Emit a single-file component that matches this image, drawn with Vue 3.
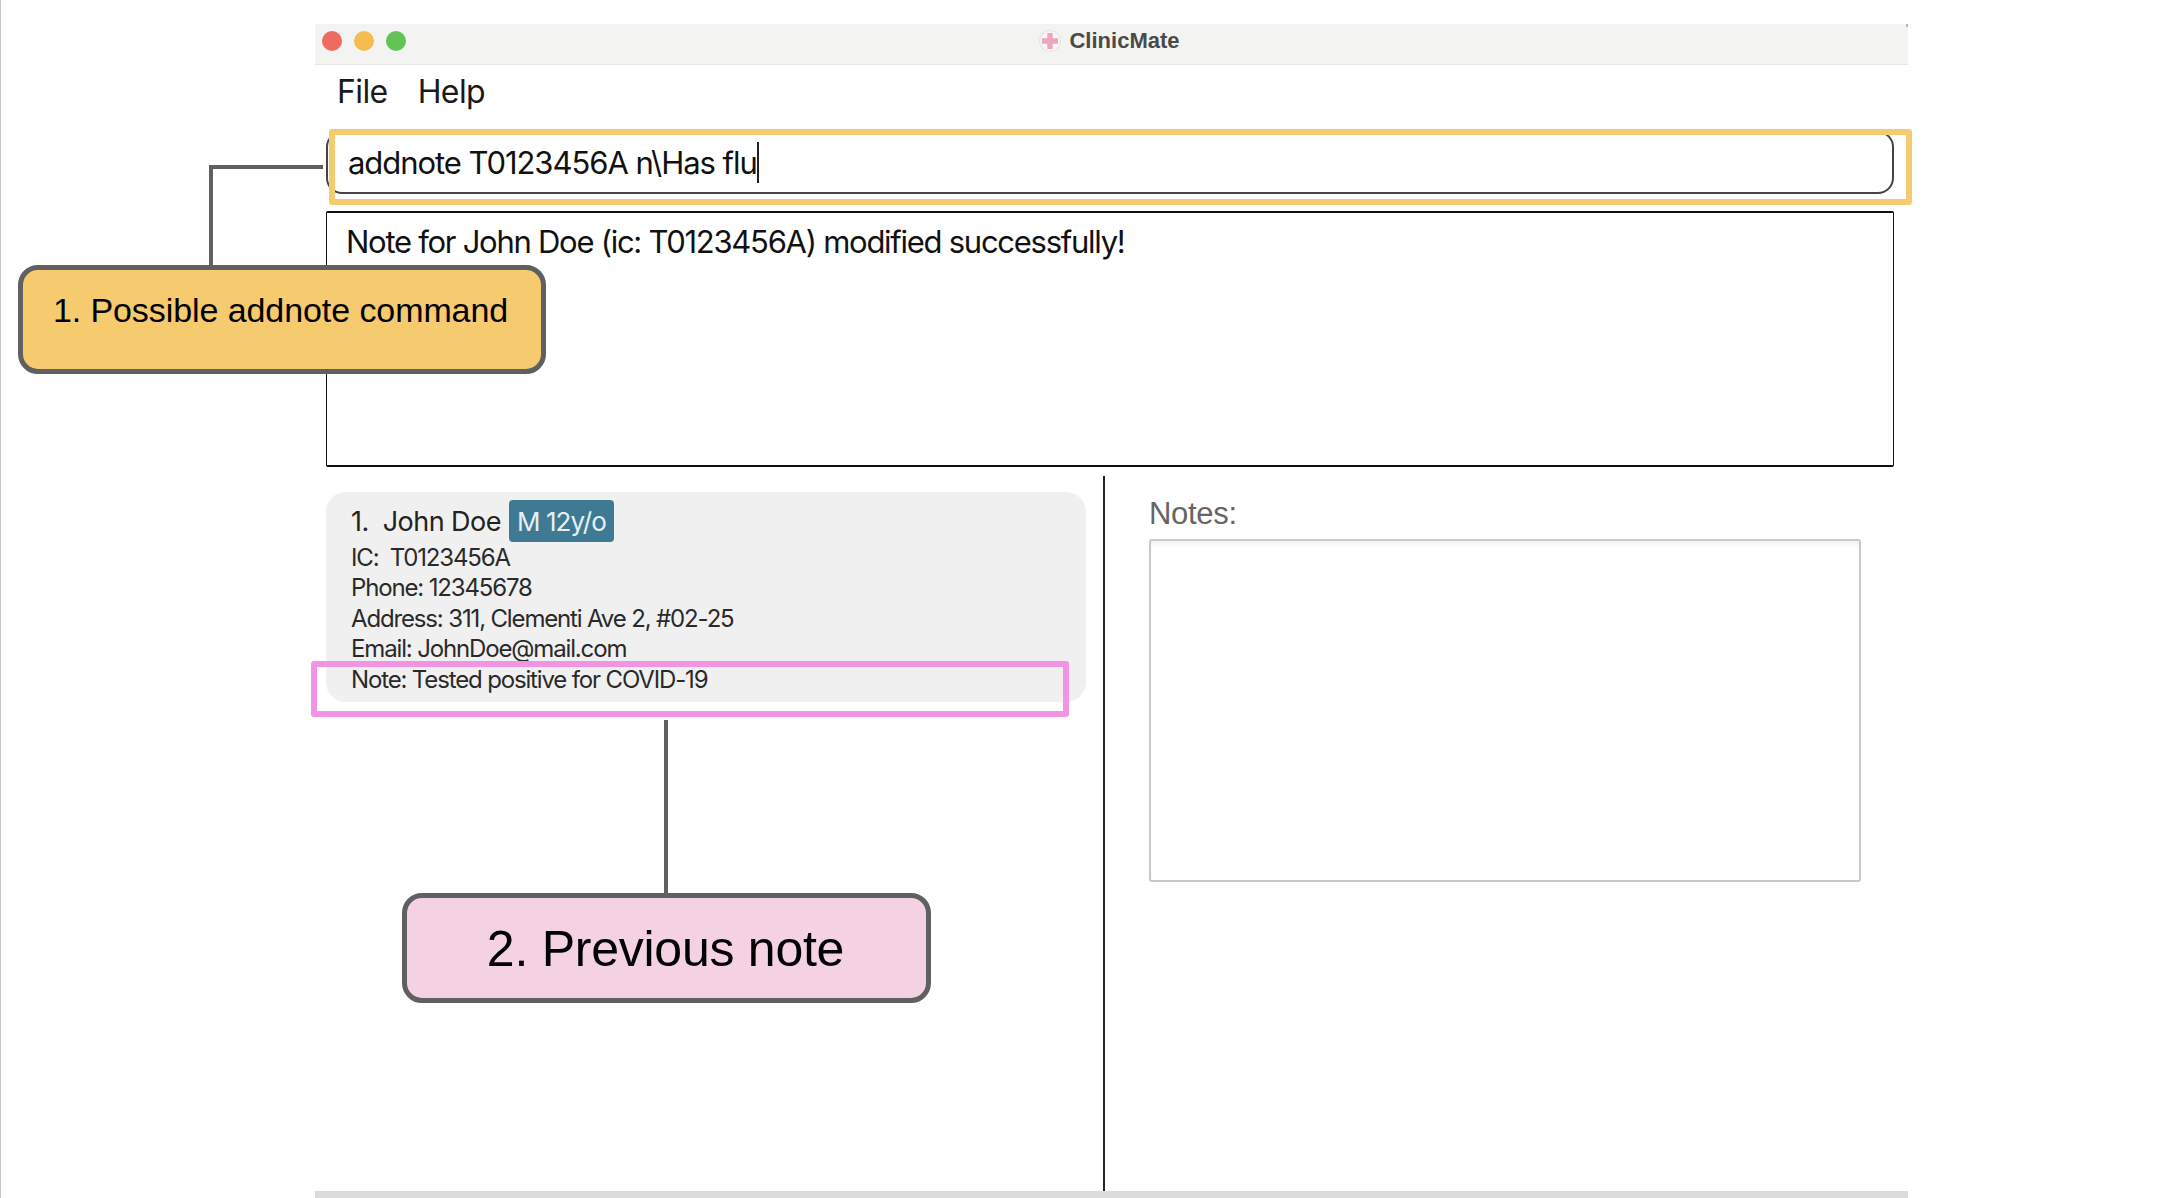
<template>
  <div class="page">
    <div class="window">
      <div class="titlebar">
        <div class="lights">
          <span class="light red"></span>
          <span class="light yellow"></span>
          <span class="light green"></span>
        </div>
        <div class="title">
          <svg class="app-icon" width="22" height="22" viewBox="0 0 22 22">
            <circle cx="11" cy="11" r="10.5" fill="#f7f5f5" stroke="#e4e2e2" />
            <path d="M8.3 3h5.4v5.3H19v5.4h-5.3V19H8.3v-5.3H3V8.3h5.3z" fill="#eea6b8" />
          </svg>
          <span>ClinicMate</span>
        </div>
      </div>

      <nav class="menu">
        <span>File</span>
        <span>Help</span>
      </nav>

      <div class="content">
        <div class="command-box">
          <span class="command-text">addnote T0123456A n\Has flu</span><span class="caret"></span>
        </div>
        <div class="result-box">Note for John Doe (ic: T0123456A) modified successfully!</div>

        <div class="split">
          <div class="list-pane">
            <div class="person-card">
              <div class="name-row">
                <span class="name">1.&nbsp; John Doe</span>
                <span class="badge">M 12y/o</span>
              </div>
              <div v-for="line in details" :key="line" class="detail">{{ line }}</div>
            </div>
          </div>
          <div class="notes-pane">
            <div class="notes-label">Notes:</div>
            <div class="notes-box"></div>
          </div>
        </div>
      </div>
      <div class="bottom-bar"></div>
    </div>

    <!-- annotations laid over the screenshot -->
    <div class="hl hl-orange"></div>
    <div class="hl hl-pink"></div>
    <div class="wire wire-a"></div>
    <div class="wire wire-b"></div>
    <div class="wire wire-c"></div>
    <div class="callout callout-one"><span>1. Possible addnote command</span></div>
    <div class="callout callout-two"><span>2. Previous note</span></div>
  </div>
</template>

<script setup>
const details = [
  'IC:\u00a0 T0123456A',
  'Phone: 12345678',
  'Address: 311, Clementi Ave 2, #02-25',
  'Email: JohnDoe@mail.com',
  'Note: Tested positive for COVID-19'
]
</script>

<style>
html,
body {
  margin: 0;
  background: #fff;
  overflow: hidden;
}
</style>

<style scoped>
.page {
  position: relative;
  width: 2164px;
  height: 1198px;
  box-sizing: border-box;
  padding: 24px 256px 0 315px;
  border-left: 1px solid #c4c4c4;
  font-family: Inter, "Liberation Sans", sans-serif;
  color: #111;
  overflow: hidden;
}

.window {
  margin-left: -1px;
  width: 1593px;
  height: 1174px;
  display: flex;
  flex-direction: column;
}

.titlebar {
  position: relative;
  height: 40px;
  flex: none;
  background: #f3f3f1;
  border-bottom: 1px solid #e8e8e8;
  display: flex;
  align-items: center;
  justify-content: center;
}

.titlebar::after {
  content: "";
  position: absolute;
  right: 0;
  top: 0;
  width: 2px;
  height: 3px;
  background: #b8b8b8;
}

.lights {
  position: absolute;
  left: 7px;
  top: 7px;
  display: flex;
  gap: 12px;
}

.light {
  width: 20px;
  height: 20px;
  border-radius: 50%;
}

.red { background: #ee6a5f; }
.yellow { background: #f5bd4f; }
.green { background: #61c454; }

.title {
  display: flex;
  align-items: center;
  gap: 8px;
  margin: -6px 0 0 -4px;
  font-family: "Liberation Sans", sans-serif;
  font-weight: 700;
  font-size: 22px;
  color: #4a4a4a;
}

.menu {
  flex: none;
  height: 60px;
  box-sizing: border-box;
  padding: 0 0 7px 22px;
  display: flex;
  align-items: center;
  gap: 30px;
  font-size: 32px;
  letter-spacing: -0.6px;
  color: #1a1a1a;
}

.content {
  flex: 1;
  min-height: 0;
  padding: 6px 14px 0 11px;
  display: flex;
  flex-direction: column;
}

.command-box {
  height: 63px;
  flex: none;
  box-sizing: border-box;
  border: 2px solid #444;
  border-radius: 16px;
  padding-left: 20px;
  display: flex;
  align-items: center;
  font-size: 31px;
  letter-spacing: -1.05px;
  color: #111;
}

.caret {
  width: 2px;
  height: 41px;
  background: #222;
}

.result-box {
  height: 256px;
  flex: none;
  margin-top: 17px;
  box-sizing: border-box;
  border-style: solid;
  border-color: #111;
  border-width: 2px 1px;
  border-radius: 2px;
  padding: 9px 19px;
  font-size: 31px;
  letter-spacing: -1.27px;
  line-height: 40px;
}

.split {
  flex: 1;
  min-height: 0;
  margin-top: 9px;
  display: flex;
}

.list-pane {
  width: 779px;
  flex: none;
  box-sizing: border-box;
  padding-top: 16px;
  border-right: 2px solid #222;
}

.person-card {
  width: 760px;
  height: 210px;
  box-sizing: border-box;
  padding: 8px 25px 0;
  background: #f0f0f0;
  border-radius: 20px;
}

.name-row {
  display: flex;
  align-items: center;
  gap: 8px;
  height: 42px;
  margin-bottom: 1px;
}

.name {
  font-size: 27px;
  letter-spacing: -0.55px;
  color: #222;
}

.badge {
  height: 42px;
  box-sizing: border-box;
  padding: 0 8px;
  display: flex;
  align-items: center;
  background: #3e7a93;
  border-radius: 4px;
  font-size: 26px;
  letter-spacing: -0.9px;
  color: #e6eff3;
}

.detail {
  font-size: 24px;
  line-height: 30.4px;
  letter-spacing: -1.15px;
  color: #2a2a2a;
}

.notes-pane {
  flex: 1;
  padding: 21px 0 0 44px;
}

.notes-label {
  font-family: "Liberation Sans", sans-serif;
  font-size: 31px;
  letter-spacing: -0.3px;
  line-height: 34px;
  color: #666;
}

.notes-box {
  width: 712px;
  height: 343px;
  margin-top: 8px;
  box-sizing: border-box;
  border: 2px solid #c9c9c9;
  border-radius: 3px;
  background: #fff;
  box-shadow: inset 0 6px 6px -4px rgba(0, 0, 0, 0.08);
}

.bottom-bar {
  flex: none;
  height: 7px;
  background: #dcdcdc;
}

.hl {
  position: absolute;
  box-sizing: border-box;
  border-radius: 3px;
}

.hl-orange {
  left: 328px;
  top: 129px;
  width: 1583px;
  height: 76px;
  border: 6px solid #f6ca6e;
}

.hl-pink {
  left: 310px;
  top: 661px;
  width: 758px;
  height: 56px;
  border: 6px solid #f194e4;
}

.wire {
  position: absolute;
  background: #606060;
}

.wire-a {
  left: 208px;
  top: 165px;
  width: 4px;
  height: 102px;
}

.wire-b {
  left: 208px;
  top: 165px;
  width: 114px;
  height: 4px;
}

.wire-c {
  left: 663px;
  top: 720px;
  width: 4px;
  height: 175px;
}

.callout {
  position: absolute;
  box-sizing: border-box;
  display: flex;
  justify-content: center;
  font-family: "Liberation Sans", sans-serif;
  color: #000;
  border: 5px solid #606060;
  border-radius: 20px;
}

.callout-one {
  left: 17px;
  top: 265px;
  width: 528px;
  height: 109px;
  padding: 20px 3px 0 0;
  background: #f6ca6e;
  font-size: 34px;
  letter-spacing: -0.08px;
  line-height: 40px;
}

.callout-two {
  left: 401px;
  top: 893px;
  width: 529px;
  height: 110px;
  padding: 23px 2px 0 0;
  background: #f4d2e4;
  font-size: 50px;
  letter-spacing: -0.25px;
  line-height: 56px;
}
</style>
